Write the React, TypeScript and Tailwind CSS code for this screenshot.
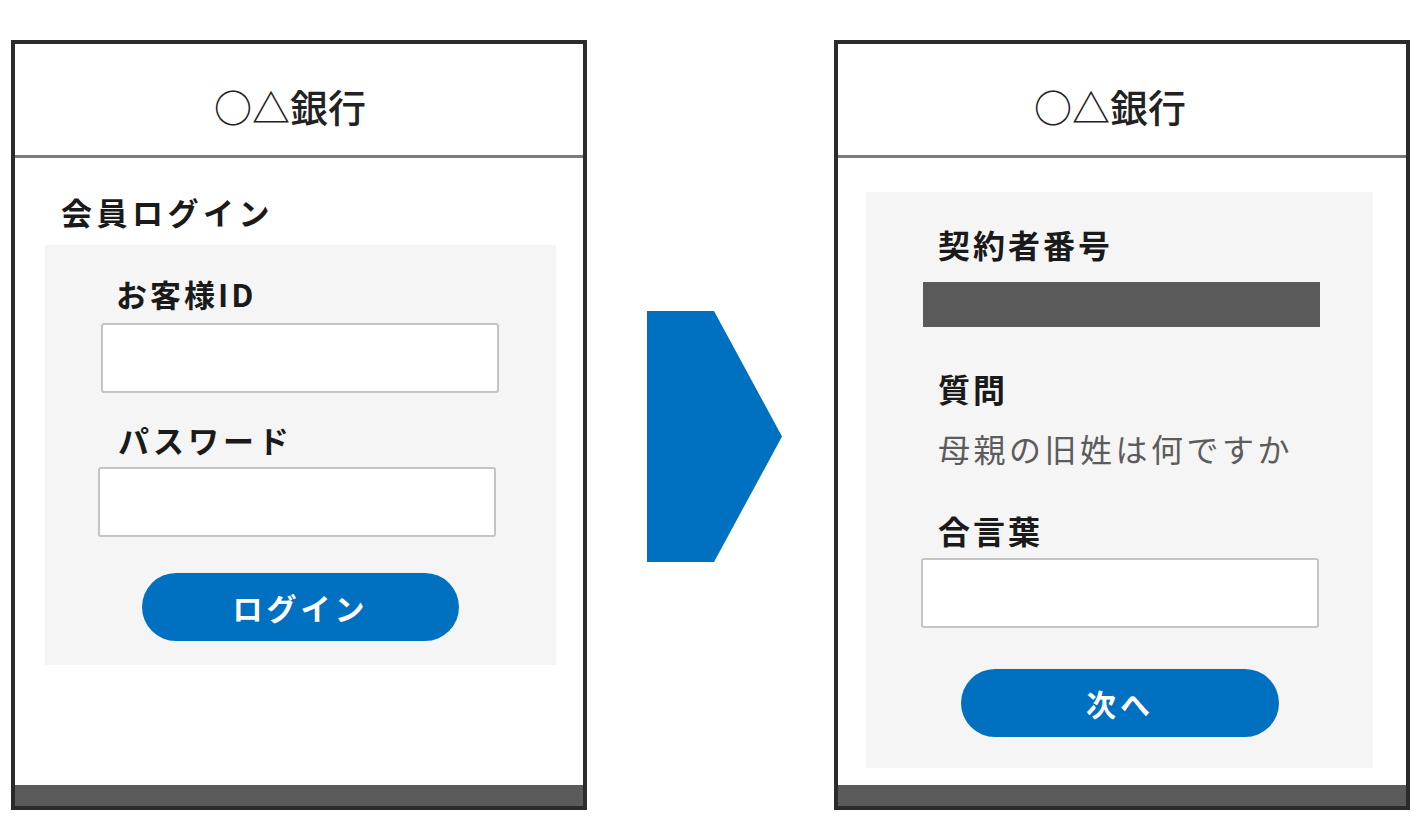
const font = { fontFamily: '"Noto Sans CJK JP", "Noto Sans", sans-serif' };

function Panel({ children, titleShift }: { children: React.ReactNode; titleShift: string }) {
	return (
		<div className="flex h-[770px] w-[576px] shrink-0 flex-col border-[4px] border-[#2b2b2b] bg-white">
			<header
				className={
					"flex h-[114px] items-center justify-center border-b-[3px] border-[#7a7a7a] pt-[12px] text-[38px] leading-none font-medium text-[#222] " +
					titleShift
				}>
				○△銀行
			</header>
			<div className="flex-1">{children}</div>
			<div className="h-[21px] bg-[#5a5a5a]" />
		</div>
	);
}

function Label({ text, className }: { text: string; className?: string }) {
	return (
		<div
			className={
				"h-[40px] text-[31px] leading-[40px] font-bold tracking-[3px] text-[#1a1a1a] " +
				(className ?? "")
			}>
			{text}
		</div>
	);
}

function Field({ className }: { className?: string }) {
	return (
		<div
			className={
				"h-[70px] w-[398px] rounded-[3px] border-2 border-[#c4c4c4] bg-white " +
				(className ?? "")
			}
		/>
	);
}

function PillButton({ text, className }: { text: string; className?: string }) {
	return (
		<div
			className={
				"flex h-[68px] w-[317px] items-center justify-center rounded-full bg-[#0070c0] text-[30px] font-bold tracking-[4px] text-white " +
				(className ?? "")
			}>
			{text}
		</div>
	);
}

export default function App() {
	return (
		<div
			className="flex h-[837px] w-[1420px] items-start bg-white pl-[11px] pt-[40px]"
			style={font}>
			<Panel titleShift="pr-[18px]">
				<Label text="会員ログイン" className="ml-[46px] mt-[34px] tracking-[4.5px]" />
				<div className="ml-[30px] mt-[13px] h-[420px] w-[511px] bg-[#f5f5f5] pt-[29px]">
					<Label text="お客様ID" className="ml-[71px] tracking-[2px]" />
					<Field className="ml-[56px] mt-[9px]" />
					<Label text="パスワード" className="ml-[73px] mt-[27px] tracking-[4px]" />
					<Field className="ml-[53px] mt-[7px]" />
					<PillButton text="ログイン" className="ml-[97px] mt-[36px]" />
				</div>
			</Panel>

			<svg
				className="ml-[60px] mt-[271px] shrink-0"
				width="135"
				height="251"
				viewBox="0 0 135 251">
				<polygon points="0,0 67,0 135,125.5 67,251 0,251" fill="#0070c0" />
			</svg>

			<div className="ml-[52px]">
				<Panel titleShift="pr-[24px]">
					<div className="ml-[28px] mt-[34px] h-[576px] w-[507px] bg-[#f5f5f5] pt-[32px]">
						<Label text="契約者番号" className="ml-[72px] text-[32px] tracking-[2px]" />
						<div className="ml-[57px] mt-[18px] h-[45px] w-[397px] bg-[#5a5a5a]" />
						<Label text="質問" className="ml-[72px] mt-[41px] text-[32px] tracking-[2px]" />
						<div className="ml-[72px] mt-[20px] h-[40px] text-[32px] leading-[40px] tracking-[3.5px] text-[#5c5c5c]">
							母親の旧姓は何ですか
						</div>
						<Label text="合言葉" className="ml-[72px] mt-[42px] text-[32px] tracking-[2px]" />
						<Field className="ml-[55px] mt-[8px]" />
						<PillButton text="次へ" className="ml-[95px] mt-[41px] w-[318px] h-[67px]" />
					</div>
				</Panel>
			</div>
		</div>
	);
}
